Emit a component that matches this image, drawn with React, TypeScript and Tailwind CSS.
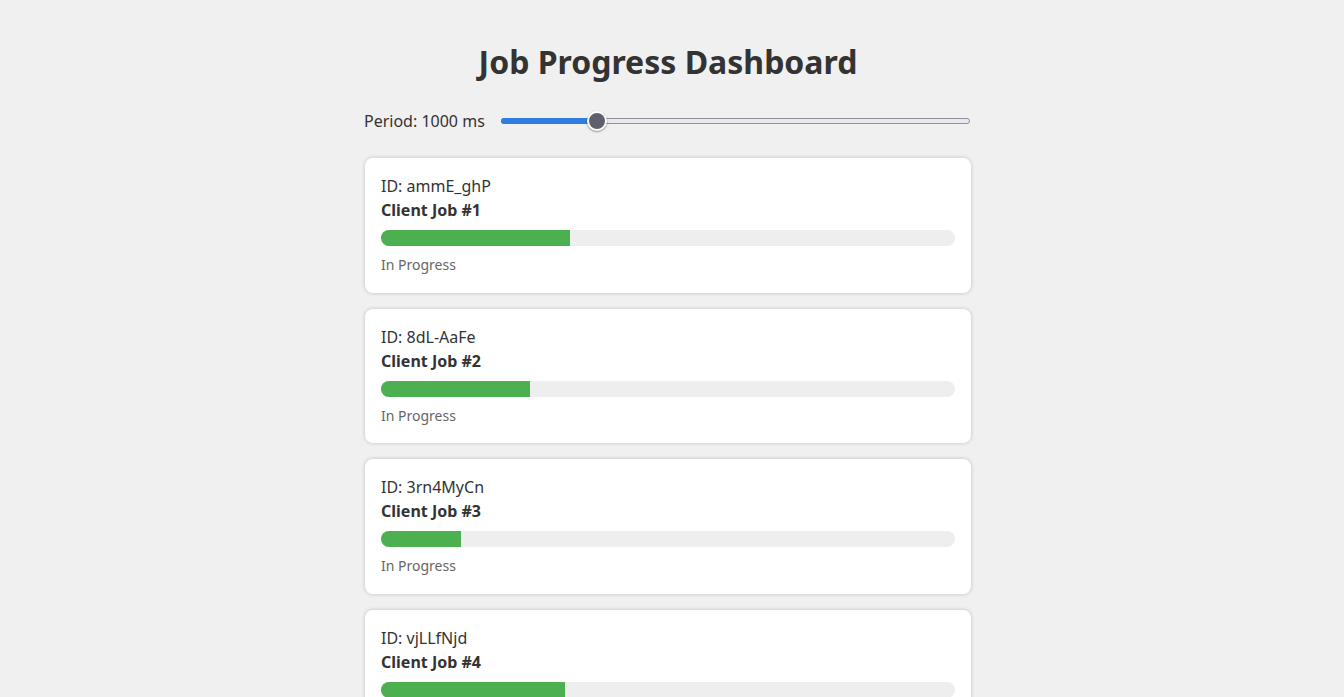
import React from "react";

const jobs = [
  { id: "ammE_ghP", name: "Client Job #1", pct: 32.9 },
  { id: "8dL-AaFe", name: "Client Job #2", pct: 26 },
  { id: "3rn4MyCn", name: "Client Job #3", pct: 13.9 },
  { id: "vjLLfNjd", name: "Client Job #4", pct: 32.1 },
  { id: "Qx7pLm2Z", name: "Client Job #5", pct: 20 },
];

export default function App() {
  return (
    <div
      className="min-h-screen bg-[#f0f0f0] pr-[8px] text-[#333]"
      style={{ fontFamily: '"Noto Sans", "Open Sans", sans-serif' }}
    >
      <div className="mx-auto w-[608px] pt-[40px] pb-8">
        <h1 className="text-center text-[32px] font-bold leading-[44px] text-[#333]">
          Job Progress Dashboard
        </h1>
        <div className="mt-[25px] flex items-center">
          <span className="text-[16px] leading-[24px]">Period: 1000 ms</span>
          <div className="relative ml-[16px] mr-[2px] h-[20px] flex-1">
            <div className="absolute left-0 right-0 top-[7px] h-[6px] rounded-full border border-[#8f8f9d] bg-[#e9e9ed]" />
            <div className="absolute left-0 top-[7px] h-[6px] w-[96px] rounded-full bg-[#2f7de1]" />
            <div className="absolute left-[86px] top-0 h-[20px] w-[20px] rounded-full border-2 border-white bg-[#5f5f6e] shadow-[0_1px_2px_rgba(0,0,0,0.4)]" />
          </div>
        </div>
        <div className="mt-[25px] flex flex-col gap-[16px]">
          {jobs.map((j) => (
            <div
              key={j.id}
              className="mx-[1px] rounded-[8px] bg-white px-[16px] pt-[16px] pb-[17.67px] shadow-[0_0_4px_rgba(0,0,0,0.2)]"
            >
              <div className="text-[16px] leading-[24px]">ID: {j.id}</div>
              <div className="text-[16px] font-bold leading-[24px]">{j.name}</div>
              <div className="mt-[8px] h-[16px] w-full overflow-hidden rounded-full bg-[#eee]">
                <div className="h-full bg-[#4caf50]" style={{ width: `${j.pct}%` }} />
              </div>
              <div className="mt-[9px] text-[14px] leading-[20px] text-[#666]">In Progress</div>
            </div>
          ))}
        </div>
      </div>
    </div>
  );
}
